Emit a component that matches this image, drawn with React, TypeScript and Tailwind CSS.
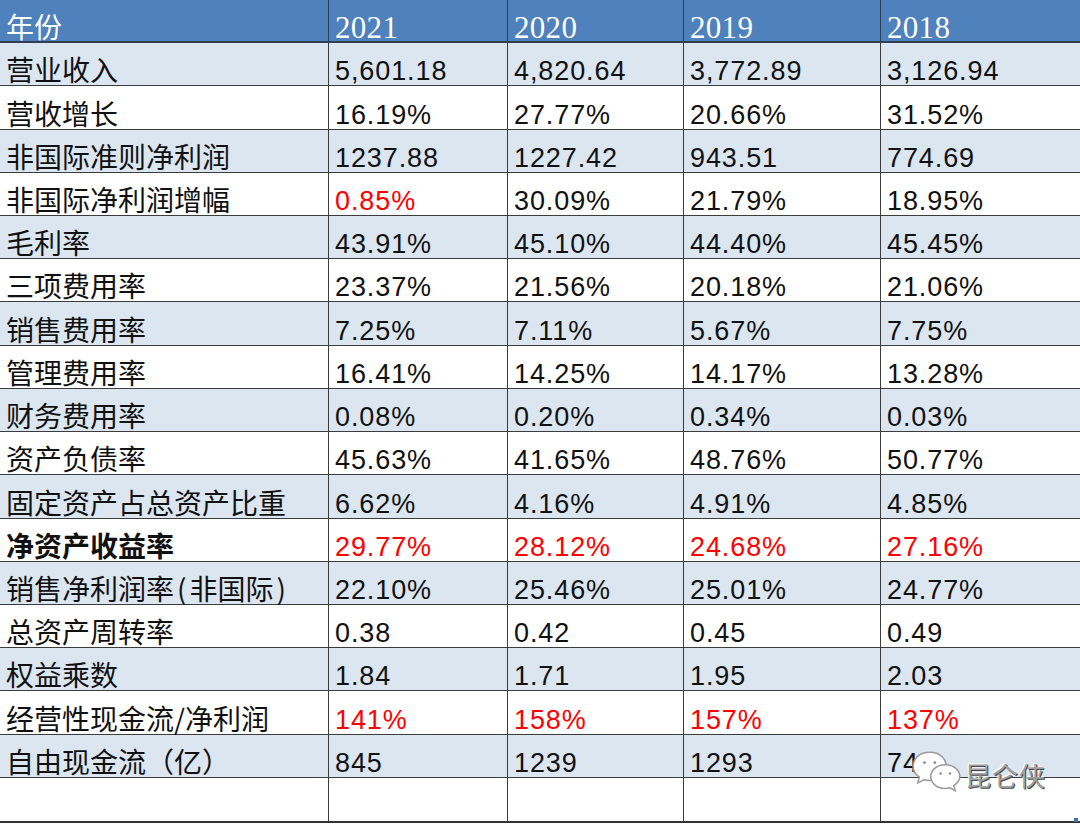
import type { ReactNode } from "react";

const P = ({ children }: { children: ReactNode }) => <span className="px-[3px]">{children}</span>;

const rows: { key: string; label: ReactNode; bold?: boolean; values: string[]; red?: boolean[] }[] = [
  { key: "a", label: "营业收入", values: ["5,601.18", "4,820.64", "3,772.89", "3,126.94"] },
  { key: "b", label: "营收增长", values: ["16.19%", "27.77%", "20.66%", "31.52%"] },
  { key: "c", label: "非国际准则净利润", values: ["1237.88", "1227.42", "943.51", "774.69"] },
  { key: "d", label: "非国际净利润增幅", values: ["0.85%", "30.09%", "21.79%", "18.95%"], red: [true, false, false, false] },
  { key: "e", label: "毛利率", values: ["43.91%", "45.10%", "44.40%", "45.45%"] },
  { key: "f", label: "三项费用率", values: ["23.37%", "21.56%", "20.18%", "21.06%"] },
  { key: "g", label: "销售费用率", values: ["7.25%", "7.11%", "5.67%", "7.75%"] },
  { key: "h", label: "管理费用率", values: ["16.41%", "14.25%", "14.17%", "13.28%"] },
  { key: "i", label: "财务费用率", values: ["0.08%", "0.20%", "0.34%", "0.03%"] },
  { key: "j", label: "资产负债率", values: ["45.63%", "41.65%", "48.76%", "50.77%"] },
  { key: "k", label: "固定资产占总资产比重", values: ["6.62%", "4.16%", "4.91%", "4.85%"] },
  { key: "l", label: "净资产收益率", bold: true, values: ["29.77%", "28.12%", "24.68%", "27.16%"], red: [true, true, true, true] },
  {
    key: "m",
    label: (
      <>
        销售净利润率<P>(</P>非国际<P>)</P>
      </>
    ),
    values: ["22.10%", "25.46%", "25.01%", "24.77%"],
  },
  { key: "n", label: "总资产周转率", values: ["0.38", "0.42", "0.45", "0.49"] },
  { key: "o", label: "权益乘数", values: ["1.84", "1.71", "1.95", "2.03"] },
  { key: "p", label: "经营性现金流/净利润", values: ["141%", "158%", "157%", "137%"], red: [true, true, true, true] },
  { key: "q", label: "自由现金流（亿）", values: ["845", "1239", "1293", "742"] },
];

const years = ["2021", "2020", "2019", "2018"];

function WeChatMark() {
  return (
    <div className="absolute left-[911px] top-[748px] flex items-center pointer-events-none">
      <svg width="54" height="52" viewBox="0 0 52 50">
        <path
          d="M18 4 C8 4 2 10.5 2 17.5 C2 22 4.5 25.5 8 28 L6.5 33.5 L12.5 30.5 C14.5 31 16 31.2 18 31.2 C28 31.2 34 24.5 34 17.5 C34 10.5 28 4 18 4 Z"
          fill="#fff"
          stroke="#9a9a9a"
          strokeWidth="1.5"
        />
        <circle cx="13" cy="14" r="1.3" fill="#888" />
        <circle cx="23" cy="14" r="1.3" fill="#888" />
        <path
          d="M33 16 C24.5 16 19 21.5 19 27.5 C19 33.5 24.5 39 33 39 C34.5 39 36 38.8 37.5 38.3 L42.5 41 L41.2 36.2 C44.5 34 47 31 47 27.5 C47 21.5 41.5 16 33 16 Z"
          fill="#fff"
          stroke="#9a9a9a"
          strokeWidth="1.5"
        />
        <circle cx="28.5" cy="24.5" r="1.2" fill="#888" />
        <circle cx="37.5" cy="24.5" r="1.2" fill="#888" />
      </svg>
      <span
        className="text-[26px] leading-[30px] text-[#a0a0a0] mt-[2px] tracking-[1px]"
        style={{
          fontFamily: '"Noto Sans CJK SC", sans-serif',
          textShadow: "1px 1px 0 #4a4a4a, -1px -1px 0 #fff",
        }}
      >
        昆仑侠
      </span>
    </div>
  );
}

export default function App() {
  return (
    <div className="relative w-[1080px] h-[824px] bg-white overflow-hidden">
      <div className="grid grid-cols-[329px_179px_176px_197px_199px] grid-rows-[repeat(19,minmax(0,1fr))] h-[823px] border-b-2 border-[#333]">
        {/* header */}
        <div
          className="bg-[#4f81bd] border-b-2 border-r border-[#2f3f55] flex items-end pl-[6px] pb-[1px] text-white text-[28px] leading-[28px]"
          style={{ fontFamily: '"Noto Sans CJK SC", sans-serif' }}
        >
          年份
        </div>
        {years.map((y, i) => (
          <div
            key={y}
            className={
              "bg-[#4f81bd] border-b-2 border-[#2f3f55] flex items-end pl-[6px] text-white text-[31px] leading-[27px] tracking-[0.3px] " +
              (i < 3 ? "border-r" : "")
            }
            style={{ fontFamily: '"Liberation Serif", serif' }}
          >
            {y}
          </div>
        ))}

        {rows.map((r, ri) => {
          const bg = ri % 2 === 0 ? "bg-[#dce6f1]" : "bg-white";
          return [
            <div
              key={r.key}
              className={
                bg +
                " border-b border-r border-[#3c3c3c] flex items-end pl-[6px] pb-[2px] text-[28px] leading-[27px] text-[#111] whitespace-nowrap " +
                (r.bold ? "font-bold" : "")
              }
              style={{ fontFamily: '"Noto Sans CJK SC", sans-serif' }}
            >
              {r.label}
            </div>,
            ...r.values.map((v, vi) => (
              <div
                key={r.key + vi}
                className={
                  bg +
                  " border-b border-[#3c3c3c] flex items-end pl-[6px] pb-0 text-[27px] leading-[27px] tracking-[0.9px] " +
                  (vi < 3 ? "border-r " : "") +
                  (r.red?.[vi] ? "text-[#ff0000]" : "text-[#111]")
                }
                style={{ fontFamily: '"Liberation Sans", Arial, sans-serif' }}
              >
                {v}
              </div>
            )),
          ];
        })}

        {/* empty last row */}
        <div className="border-r border-[#3c3c3c]" />
        <div className="border-r border-[#3c3c3c]" />
        <div className="border-r border-[#3c3c3c]" />
        <div className="border-r border-[#3c3c3c]" />
        <div />
      </div>
      <WeChatMark />
      <div className="absolute right-[2px] bottom-[2px] w-[4px] h-[4px] bg-[#4a6fb0]" />
    </div>
  );
}
